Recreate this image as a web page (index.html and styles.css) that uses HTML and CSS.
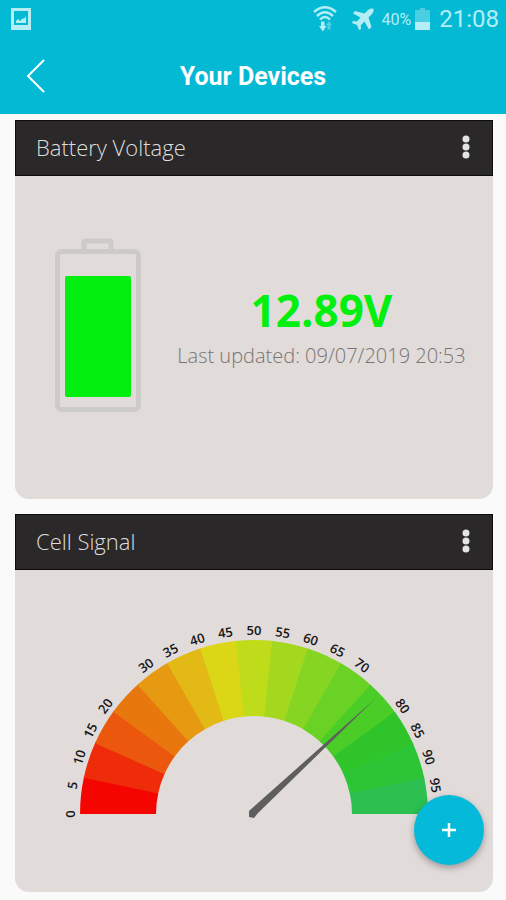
FILE: index.html
```html
<!DOCTYPE html>
<html lang="en">
<head>
<meta charset="utf-8">
<meta name="viewport" content="width=device-width, initial-scale=1">
<title>Your Devices</title>
<link rel="stylesheet" href="styles.css">
</head>
<body>
<header class="top">
  <div class="status">
    <svg class="status-picture" width="20" height="22" viewBox="0 0 20 22" aria-hidden="true">
      <path d="M0 0H20V22H0ZM3 3V17H17V3Z" fill-rule="evenodd"/>
      <path d="M5 15V13L7 11L9 13L12 10L13 11L15 8V15Z"/>
    </svg>
    <div class="status-right">
      <svg class="status-wifi" width="24" height="26" viewBox="0 0 24 26" aria-hidden="true">
        <g fill="none" stroke="currentColor" stroke-width="2.400">
          <path d="M1 6Q12 -3.500 23 6"/>
          <path d="M4 10Q12 2.500 20 10"/>
          <path d="M7 13.500Q12 8.500 17 13.500"/>
        </g>
        <path d="M8 15.500H11.500V20H13.500L9.800 25.500L6 20H8Z"/>
        <path d="M16 15L19 19H17.500V23.500H14.500V19H13Z" opacity=".45"/>
      </svg>
      <svg class="status-plane" width="22" height="22" viewBox="0 0 22 22" aria-hidden="true">
        <path d="M21.500 1C19 0 17 1 15 3L12.500 5.500L3 3L1 5.500L8.500 9.500L5 13.500L1 13L0 15L5 17L7 22L9 21L8.800 17.300L12.500 13.500L17 21.500L19.500 19L16.500 9.500L19 7C21 5 22 3 21.500 1Z"/>
      </svg>
      <span class="percent">40%</span>
      <svg class="status-battery" width="15" height="22" viewBox="0 0 15 22" aria-hidden="true">
        <path d="M5 0H10V2H15V14H0V2H5Z" opacity=".4"/>
        <path d="M0 14H15V22H0Z"/>
      </svg>
      <time class="clock">21:08</time>
    </div>
  </div>
  <nav class="bar">
    <button class="back" type="button" aria-label="Back">
      <svg width="20" height="36" viewBox="0 0 20 36" aria-hidden="true"><path d="M18 2L2 18L18 34" fill="none" stroke="currentColor" stroke-width="2"/></svg>
    </button>
    <h1 class="title">Your Devices</h1>
  </nav>
</header>
<main class="cards">
  <section class="card">
    <header class="card-head">
      <h2 class="card-title">Battery Voltage</h2>
      <button class="more" type="button" aria-label="Battery Voltage options">
        <svg width="10" height="26" viewBox="0 0 10 26" aria-hidden="true"><circle cx="5" cy="5" r="3.500"/><circle cx="5" cy="13" r="3.500"/><circle cx="5" cy="21" r="3.500"/></svg>
      </button>
    </header>
    <div class="battery-body">
      <svg class="battery" width="86" height="174" viewBox="0 0 86 174" aria-hidden="true">
        <g fill="none" stroke="#cdcbca" stroke-width="5">
          <rect x="2.500" y="13.500" width="81" height="158" rx="4"/>
          <path d="M29 13V5Q29 3 31 3H54Q56 3 56 5V13"/>
        </g>
        <rect x="10" y="38" width="66" height="121" rx="2" fill="#03ef10"/>
      </svg>
      <div class="reading">
        <p class="volts">12.89V</p>
        <p class="updated">Last updated: 09/07/2019 20:53</p>
      </div>
    </div>
  </section>
  <section class="card">
    <header class="card-head">
      <h2 class="card-title">Cell Signal</h2>
      <button class="more" type="button" aria-label="Cell Signal options">
        <svg width="10" height="26" viewBox="0 0 10 26" aria-hidden="true"><circle cx="5" cy="5" r="3.500"/><circle cx="5" cy="13" r="3.500"/><circle cx="5" cy="21" r="3.500"/></svg>
      </button>
    </header>
    <svg class="gauge" viewBox="0 0 478 322" role="img" aria-label="Cell signal gauge">
      <g id="segments"></g>
      <g id="labels" class="gauge-labels"></g>
      <path d="M361 128L234 241V247L239 248L243 243Z" fill="#5e5e5e"/>
    </svg>
  </section>
</main>
<button class="add" type="button" aria-label="Add device">
  <svg width="14" height="14" viewBox="0 0 14 14" aria-hidden="true"><path d="M7 0V14M0 7H14" stroke="currentColor" stroke-width="2.500"/></svg>
</button>
<script src="gauge.js"></script>
</body>
</html>
```
FILE: styles.css
```css
* {
  box-sizing: border-box;
}

body {
  margin: 0;
  background: #fafafa;
  font-family: "Open Sans", sans-serif;
}

h1,
h2,
p {
  margin: 0;
}

button {
  display: flex;
  align-items: center;
  justify-content: center;
  padding: 0;
  border: 0;
  background: none;
  cursor: pointer;
}

svg {
  display: block;
  fill: currentColor;
}

.top {
  background: #04b9d4;
  color: #fff;
  font-family: Roboto, sans-serif;
}

.status {
  display: flex;
  align-items: center;
  justify-content: space-between;
  height: 38px;
  padding: 0 7px 0 11px;
  color: #b5edf5;
}

.status-right {
  display: flex;
  align-items: center;
}

.status-plane {
  margin: 0 8px 0 15px;
}

.percent {
  font-size: 16px;
}

.status-battery {
  margin: 0 9px 0 4px;
}

.clock {
  font-size: 24px;
}

.bar {
  display: grid;
  grid-template-columns: 72px 1fr 72px;
  align-items: center;
  height: 76px;
}

.back {
  height: 76px;
  color: #fff;
}

.title {
  font-size: 25px;
  font-weight: 700;
  text-align: center;
}

.cards {
  display: grid;
  gap: 15px;
  padding: 6px 13px 8px 15px;
}

.card {
  overflow: hidden;
  border-radius: 0 0 14px 14px;
  background: #e1dbda;
}

.card-head {
  display: flex;
  align-items: center;
  justify-content: space-between;
  height: 56px;
  padding: 0 12px 2px 20px;
  border: 1px solid #0c0c0c;
  background: #2a2829;
}

.card-title {
  color: #dedede;
  font-size: 22px;
  font-weight: 300;
}

.more {
  width: 28px;
  height: 44px;
  color: #e4e4e4;
}

.battery-body {
  display: flex;
  align-items: center;
  gap: 24px;
  height: 323px;
  padding: 0 15px 26px 40px;
}

.battery {
  flex: none;
}

.reading {
  flex: 1;
  padding-top: 6px;
  text-align: center;
}

.volts {
  color: #03ef10;
  font-size: 44px;
  font-weight: 700;
  line-height: 56px;
}

.updated {
  color: #787473;
  font-size: 20px;
  font-weight: 300;
  line-height: 36px;
}

.gauge {
  width: 100%;
}

.gauge-labels {
  fill: #161616;
  font-size: 13px;
  font-weight: 600;
  text-anchor: middle;
}

.add {
  position: fixed;
  right: 22px;
  bottom: 35px;
  width: 70px;
  height: 70px;
  border-radius: 50%;
  background: #04bad8;
  box-shadow: 0 3px 7px rgba(0, 0, 0, 0.3);
  color: #fff;
}
```
FILE: gauge.js
```js
const NS = "http://www.w3.org/2000/svg";
const CX = 239;
const CY = 244;
const OUTER = 174;
const INNER = 98;
const LABEL = 184;
const colors = [
  "#f50500", "#ee2c0a", "#eb570d", "#e8780e", "#e69a12",
  "#e2b915", "#dcd716", "#bfdc1b", "#a3d81f", "#85d522",
  "#69d224", "#4acd26", "#2fc52a", "#2bc535", "#2cc050"
];
const values = [0, 5, 10, 15, 20, 30, 35, 40, 45, 50, 55, 60, 65, 70, 80, 85, 90, 95];

function point(radius, degrees) {
  const a = degrees * Math.PI / 180;
  return (CX - radius * Math.cos(a)) + " " + (CY - radius * Math.sin(a));
}

// Each segment runs a little under the next one, so no seam shows.
const step = 180 / colors.length;
colors.forEach((color, i) => {
  const from = i * step;
  const to = Math.min(from + step + 0.5, 180);
  const path = document.createElementNS(NS, "path");
  path.setAttribute("d",
    "M" + point(OUTER, from) +
    "A" + OUTER + " " + OUTER + " 0 0 1 " + point(OUTER, to) +
    "L" + point(INNER, to) +
    "A" + INNER + " " + INNER + " 0 0 0 " + point(INNER, from) + "Z");
  path.setAttribute("fill", color);
  document.getElementById("segments").append(path);
});

values.forEach((value) => {
  const text = document.createElementNS(NS, "text");
  text.setAttribute("x", CX);
  text.setAttribute("y", CY - LABEL + 5);
  text.setAttribute("transform", "rotate(" + (value * 1.8 - 90) + " " + CX + " " + CY + ")");
  text.textContent = value;
  document.getElementById("labels").append(text);
});
```
